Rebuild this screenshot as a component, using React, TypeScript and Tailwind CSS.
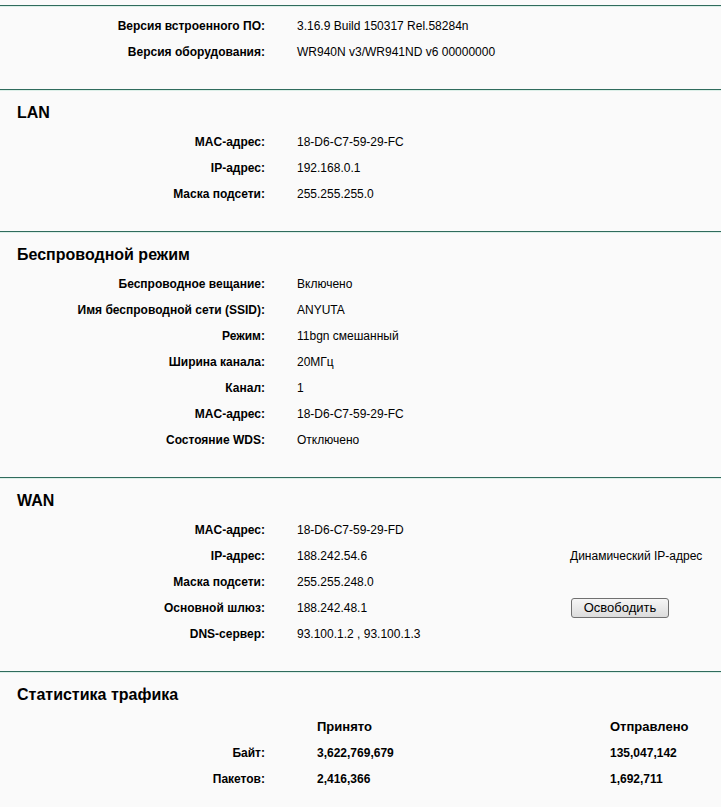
const font = { fontFamily: '"Liberation Sans", Arial, sans-serif' }

type Row = { label: string; value: string; extra?: React.ReactNode }

function Divider() {
  return (
    <div>
      <div className="h-px bg-[#2f6b5c]" />
      <div className="h-px bg-[#dcefe8]" />
    </div>
  )
}

function Heading({ title }: { title: string }) {
  return (
    <div className="h-[37px] pt-[12px] pl-[17px] text-[16px] font-bold leading-[20px] text-black">
      {title}
    </div>
  )
}

function InfoRows({ rows }: { rows: Row[] }) {
  return (
    <div>
      {rows.map((r) => (
        <div key={r.label + r.value} className="flex h-[26px] items-center pt-[2px] text-[12px] text-black">
          <div className="w-[265px] shrink-0 text-right font-bold">{r.label}</div>
          <div className="w-[273px] shrink-0 pl-[32px]">{r.value}</div>
          <div className="flex-1">{r.extra}</div>
        </div>
      ))}
    </div>
  )
}

function Section({ title, rows }: { title?: string; rows: Row[] }) {
  return (
    <section>
      <Divider />
      {title ? <Heading title={title} /> : <div className="h-[5px]" />}
      <InfoRows rows={rows} />
      <div className="h-[25px]" />
    </section>
  )
}

export default function App() {
  return (
    <div className="min-h-[807px] w-[721px] bg-[#fafafa] pt-[5px]" style={font}>
      <Section
        rows={[
          { label: 'Версия встроенного ПО:', value: '3.16.9 Build 150317 Rel.58284n' },
          { label: 'Версия оборудования:', value: 'WR940N v3/WR941ND v6 00000000' },
        ]}
      />
      <Section
        title="LAN"
        rows={[
          { label: 'MAC-адрес:', value: '18-D6-C7-59-29-FC' },
          { label: 'IP-адрес:', value: '192.168.0.1' },
          { label: 'Маска подсети:', value: '255.255.255.0' },
        ]}
      />
      <Section
        title="Беспроводной режим"
        rows={[
          { label: 'Беспроводное вещание:', value: 'Включено' },
          { label: 'Имя беспроводной сети (SSID):', value: 'ANYUTA' },
          { label: 'Режим:', value: '11bgn смешанный' },
          { label: 'Ширина канала:', value: '20МГц' },
          { label: 'Канал:', value: '1' },
          { label: 'MAC-адрес:', value: '18-D6-C7-59-29-FC' },
          { label: 'Состояние WDS:', value: 'Отключено' },
        ]}
      />
      <Section
        title="WAN"
        rows={[
          { label: 'MAC-адрес:', value: '18-D6-C7-59-29-FD' },
          { label: 'IP-адрес:', value: '188.242.54.6', extra: <span className="pl-[32px]">Динамический IP-адрес</span> },
          { label: 'Маска подсети:', value: '255.255.248.0' },
          {
            label: 'Основной шлюз:',
            value: '188.242.48.1',
            extra: (
              <button className="ml-[33px] h-[20px] w-[98px] rounded-[3px] border border-[#707070] bg-gradient-to-b from-[#f6f6f6] to-[#dcdcdc] text-[13px] leading-[18px] text-black">
                Освободить
              </button>
            ),
          },
          { label: 'DNS-сервер:', value: '93.100.1.2 , 93.100.1.3' },
        ]}
      />
      <section>
        <Divider />
        <Heading title="Статистика трафика" />
        <div className="pt-[3px] text-[12px] font-bold text-black">
          {[
            { label: '', a: 'Принято', b: 'Отправлено', big: true },
            { label: 'Байт:', a: '3,622,769,679', b: '135,047,142' },
            { label: 'Пакетов:', a: '2,416,366', b: '1,692,711' },
          ].map((r) => (
            <div key={r.a} className="flex h-[26px] items-center pt-[2px]">
              <div className="w-[265px] shrink-0 text-right">{r.label}</div>
              <div className={`w-[345px] shrink-0 pl-[52px] ${r.big ? 'text-[13px]' : ''}`}>{r.a}</div>
              <div className={r.big ? 'text-[13px]' : ''}>{r.b}</div>
            </div>
          ))}
        </div>
      </section>
    </div>
  )
}
